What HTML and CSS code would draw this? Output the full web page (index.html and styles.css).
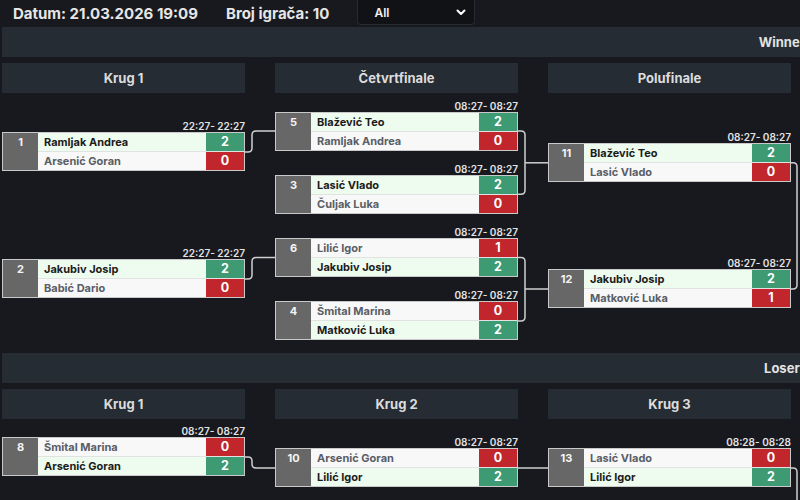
FILE: index.html
```html
<!DOCTYPE html>
<html lang="hr">
<head>
<meta charset="utf-8">
<title>Bracket</title>
<link rel="stylesheet" href="styles.css">
</head>
<body>
<div class="viewport">
  <div class="page">
    <div class="topbar">
      <span class="info">Datum: 21.03.2026 19:09</span>
      <span class="info">Broj igrača: 10</span>
      <div class="select">
        <span>All</span>
        <svg class="chev" width="10" height="7" viewBox="0 0 10 7"><path d="M1.5 1.5 L5 5 L8.5 1.5" fill="none" stroke="#fff" stroke-width="2" stroke-linecap="round" stroke-linejoin="round"/></svg>
      </div>
    </div>

    <section class="bracket">
      <div class="band">Winners</div>
      <div class="rounds winners">
        <div class="round r1">
          <div class="round-head">Krug 1</div>
          <div class="match">
            <div class="time">22:27- 22:27</div>
            <div class="box">
              <div class="seed">1</div>
              <div class="name win">Ramljak Andrea</div><div class="score win">2</div>
              <div class="name lose row2">Arsenić Goran</div><div class="score lose row2">0</div>
            </div>
          </div>
          <div class="match">
            <div class="time">22:27- 22:27</div>
            <div class="box">
              <div class="seed">2</div>
              <div class="name win">Jakubiv Josip</div><div class="score win">2</div>
              <div class="name lose row2">Babić Dario</div><div class="score lose row2">0</div>
            </div>
          </div>
        </div>
        <div class="round r2">
          <div class="round-head">Četvrtfinale</div>
          <div class="match">
            <div class="time">08:27- 08:27</div>
            <div class="box">
              <div class="seed">5</div>
              <div class="name win">Blažević Teo</div><div class="score win">2</div>
              <div class="name lose row2">Ramljak Andrea</div><div class="score lose row2">0</div>
            </div>
          </div>
          <div class="match">
            <div class="time">08:27- 08:27</div>
            <div class="box">
              <div class="seed">3</div>
              <div class="name win">Lasić Vlado</div><div class="score win">2</div>
              <div class="name lose row2">Čuljak Luka</div><div class="score lose row2">0</div>
            </div>
          </div>
          <div class="match">
            <div class="time">08:27- 08:27</div>
            <div class="box">
              <div class="seed">6</div>
              <div class="name lose">Lilić Igor</div><div class="score lose">1</div>
              <div class="name win row2">Jakubiv Josip</div><div class="score win row2">2</div>
            </div>
          </div>
          <div class="match">
            <div class="time">08:27- 08:27</div>
            <div class="box">
              <div class="seed">4</div>
              <div class="name lose">Šmital Marina</div><div class="score lose">0</div>
              <div class="name win row2">Matković Luka</div><div class="score win row2">2</div>
            </div>
          </div>
        </div>
        <div class="round r3">
          <div class="round-head">Polufinale</div>
          <div class="match">
            <div class="time">08:27- 08:27</div>
            <div class="box">
              <div class="seed">11</div>
              <div class="name win">Blažević Teo</div><div class="score win">2</div>
              <div class="name lose row2">Lasić Vlado</div><div class="score lose row2">0</div>
            </div>
          </div>
          <div class="match">
            <div class="time">08:27- 08:27</div>
            <div class="box">
              <div class="seed">12</div>
              <div class="name win">Jakubiv Josip</div><div class="score win">2</div>
              <div class="name lose row2">Matković Luka</div><div class="score lose row2">1</div>
            </div>
          </div>
        </div>
      </div>

      <div class="band">Losers</div>
      <div class="rounds losers">
        <div class="round r1">
          <div class="round-head">Krug 1</div>
          <div class="match">
            <div class="time">08:27- 08:27</div>
            <div class="box">
              <div class="seed">8</div>
              <div class="name lose">Šmital Marina</div><div class="score lose">0</div>
              <div class="name win row2">Arsenić Goran</div><div class="score win row2">2</div>
            </div>
          </div>
        </div>
        <div class="round r2">
          <div class="round-head">Krug 2</div>
          <div class="match">
            <div class="time">08:27- 08:27</div>
            <div class="box">
              <div class="seed">10</div>
              <div class="name lose">Arsenić Goran</div><div class="score lose">0</div>
              <div class="name win row2">Lilić Igor</div><div class="score win row2">2</div>
            </div>
          </div>
        </div>
        <div class="round r3">
          <div class="round-head">Krug 3</div>
          <div class="match">
            <div class="time">08:28- 08:28</div>
            <div class="box">
              <div class="seed">13</div>
              <div class="name lose">Lasić Vlado</div><div class="score lose">0</div>
              <div class="name win row2">Lilić Igor</div><div class="score win row2">2</div>
            </div>
          </div>
        </div>
      </div>
    </section>

    <svg class="links" width="800" height="500" viewBox="0 0 800 500">
      <g fill="none" stroke="#cfcfcf" stroke-width="1.5">
        <path d="M245 152 H248 Q252 152 252 148 V135 Q252 131 256 131 H275"/>
        <path d="M245 279 H248 Q252 279 252 275 V261.6 Q252 257.6 256 257.6 H275"/>
        <path d="M517 131 H521 Q525 131 525 135 V190.3 Q525 194.3 521 194.3 H517"/>
        <path d="M525 162.8 H548"/>
        <path d="M517 257.6 H521 Q525 257.6 525 261.6 V316.9 Q525 320.9 521 320.9 H517"/>
        <path d="M525 289 H548"/>
        <path d="M790 162.8 H793 Q797 162.8 797 166.8 V285 Q797 289 793 289 H790"/>
        <path d="M245 457 H248 Q252 457 252 461 V464 Q252 468 256 468 H275"/>
        <path d="M517 468 H548"/>
        <path d="M790 468 H793 Q797 468 797 472 V500"/>
      </g>
    </svg>
  </div>
</div>
</body>
</html>
```

FILE: styles.css
```css
html, body {
  margin: 0;
  padding: 0;
  background: #17191e;
  overflow: hidden;
}

body {
  font-family: Inter, "Noto Sans", "Liberation Sans", sans-serif;
}

.viewport {
  width: 800px;
  height: 500px;
  overflow: hidden;
}

.page {
  position: relative;
  width: 1571px;
  padding: 0 2px;
  box-sizing: border-box;
}

.topbar {
  height: 26px;
  display: flex;
  align-items: center;
  padding-left: 11px;
}

.info {
  font-size: 15px;
  font-weight: 700;
  color: #e6e6e6;
  white-space: nowrap;
}

.info + .info {
  margin-left: 28px;
}

.select {
  align-self: flex-start;
  margin-left: 28px;
  width: 118px;
  height: 25px;
  box-sizing: border-box;
  background: #101216;
  border: 1px solid #262a31;
  border-top: none;
  border-radius: 0 0 4px 4px;
  display: flex;
  align-items: center;
  justify-content: space-between;
  padding: 0 8px 0 16px;
  font-size: 12px;
  font-weight: 600;
  color: #f0f0f0;
}

.chev {
  display: block;
}

.band {
  height: 30px;
  margin-top: 1px;
  background: #262c34;
  text-align: center;
  line-height: 30px;
  font-size: 13px;
  font-weight: 700;
  color: #e2e2e2;
}

.rounds {
  display: grid;
  grid-template-columns: repeat(4, 243px);
  column-gap: 30px;
  margin-top: 6px;
  align-items: start;
}

.rounds.winners {
  height: 284px;
  margin-bottom: 6px;
}

.round {
  display: flex;
  flex-direction: column;
}

.round-head {
  height: 30px;
  background: #262c34;
  text-align: center;
  line-height: 30px;
  font-size: 13px;
  font-weight: 700;
  color: #dcdcdc;
}

.match {
  display: flex;
  flex-direction: column;
}

.time {
  height: 12px;
  line-height: 12px;
  font-size: 10px;
  font-weight: 600;
  color: #e3e3e3;
  text-align: right;
}

.box {
  display: grid;
  grid-template-columns: 35px 1fr 38px;
  grid-template-rows: 18px 19px;
  border: 1px solid #c9c9c9;
}

.seed {
  grid-row: span 2;
  background: #676767;
  color: #f4f4f4;
  font-size: 11px;
  font-weight: 700;
  line-height: 18px;
  text-align: center;
}

.name {
  padding-left: 6px;
  font-size: 11px;
  font-weight: 700;
  line-height: 18px;
  white-space: nowrap;
  overflow: hidden;
}

.name.win {
  background: #edfcee;
  color: #1b1b1b;
}

.name.lose {
  background: #f8f8f8;
  color: #5a5e66;
}

.score {
  text-align: center;
  color: #ffffff;
  font-size: 12.5px;
  font-weight: 700;
  line-height: 18px;
}

.score.win {
  background: #3d9a73;
}

.score.lose {
  background: #c0262c;
}

.row2 {
  border-top: 1px solid #e2e2e2;
}

/* vertical placement of matches within each round */
.winners .r1 .round-head + .match { margin-top: 27.3px; }
.winners .r1 .match + .match { margin-top: 76px; }
.winners .r2 .round-head + .match { margin-top: 6.5px; }
.winners .r2 .match + .match { margin-top: 12.3px; }
.winners .r3 .round-head + .match { margin-top: 38.3px; }
.winners .r3 .match + .match { margin-top: 75.2px; }

.losers .r1 .round-head + .match { margin-top: 6.3px; }
.losers .r2 .round-head + .match,
.losers .r3 .round-head + .match { margin-top: 17.3px; }

.links {
  position: absolute;
  top: 0;
  left: 0;
  pointer-events: none;
}
```
